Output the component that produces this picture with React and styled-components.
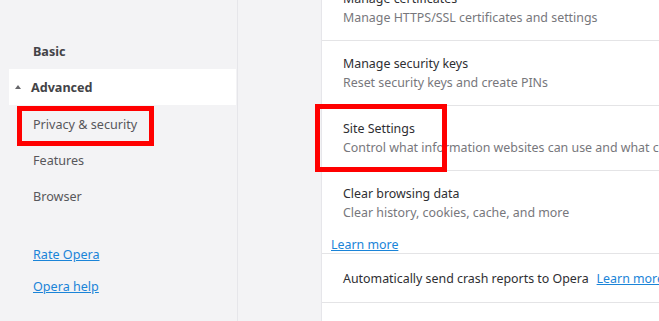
import React from "react";
import styled, { createGlobalStyle } from "styled-components";

const Global = createGlobalStyle`
  html, body { margin: 0; padding: 0; }
  body {
    width: 659px; height: 321px; overflow: hidden;
    font-family: "Noto Sans", "Open Sans", sans-serif;
    background: #f3f3f5;
  }
`;

const Page = styled.div`
  position: relative;
  display: flex;
  width: 659px;
  height: 321px;
  overflow: hidden;
  background: #f3f3f5;
`;

const Sidebar = styled.nav`
  width: 237px;
  flex: none;
  border-right: 1px solid #e6e6ea;
  padding-top: 33px;
  box-sizing: content-box;
  display: flex;
  flex-direction: column;
`;

const NavItem = styled.div`
  height: 36px;
  display: flex;
  align-items: center;
  margin-left: 9px;
  margin-right: 1px;
  padding-left: ${(p) => (p.$expander ? "6px" : "24px")};
  padding-top: ${(p) => (p.$bold ? "0" : "2px")};
  box-sizing: border-box;
  background: ${(p) => (p.$active ? "#ffffff" : "transparent")};
  color: ${(p) => (p.$bold ? "#434347" : "#57575b")};
  font-weight: ${(p) => (p.$bold ? 700 : 400)};
  font-size: 12.6px;
`;

const Caret = styled.span`
  width: 0;
  height: 0;
  border-left: 3.5px solid transparent;
  border-right: 3.5px solid transparent;
  border-bottom: 4px solid #66666a;
  margin-right: 10px;
`;

const LinkGroup = styled.div`
  margin-top: 33px;
  display: flex;
  flex-direction: column;
  gap: 14px;
  padding-left: 33px;
`;

const SideLink = styled.a`
  color: #1a84d8;
  text-decoration: underline;
  font-size: 12.6px;
  line-height: 18px;
  cursor: pointer;
`;

const Gutter = styled.div`
  width: 83px;
  flex: none;
  border-right: 1px solid #e6e6ea;
`;

const Card = styled.main`
  flex: 1;
  background: #ffffff;
  overflow: hidden;
`;

const Scroller = styled.div`
  margin-top: -24px;
`;

const Row = styled.div`
  padding: 14px 0 ${(p) => (p.$tight ? "0" : "13px")} 21px;
  border-bottom: 1px solid #e4e4e6;
  display: flex;
  flex-direction: column;
  gap: 1px;
`;

const Title = styled.div`
  font-size: 12.4px;
  line-height: 18px;
  color: #2e2e32;
  white-space: nowrap;
`;

const Sub = styled.div`
  font-size: 12.4px;
  line-height: 18px;
  color: #77777c;
  white-space: nowrap;
`;

const RowLink = styled.a`
  align-self: flex-start;
  color: #1a84d8;
  text-decoration: underline;
  font-size: 12.4px;
  line-height: 16px;
  margin: 14px 0 0 -12px;
  cursor: pointer;
`;

const InlineRow = styled.div`
  padding: 16px 0 14px 21px;
  border-bottom: 1px solid #e4e4e6;
  display: flex;
  gap: 8px;
  font-size: 12.4px;
  line-height: 18px;
  color: #2e2e32;
  white-space: nowrap;
`;

const InlineLink = styled.a`
  color: #1a84d8;
  text-decoration: underline;
  cursor: pointer;
`;

const Highlight = styled.div`
  position: absolute;
  box-sizing: border-box;
  border: 5px solid #ff0000;
  pointer-events: none;
`;

export default function App() {
  return (
    <>
      <Global />
      <Page>
        <Sidebar>
          <NavItem $bold>Basic</NavItem>
          <NavItem $bold $active $expander>
            <Caret />
            Advanced
          </NavItem>
          <NavItem>Privacy &amp; security</NavItem>
          <NavItem>Features</NavItem>
          <NavItem>Browser</NavItem>
          <LinkGroup>
            <SideLink>Rate Opera</SideLink>
            <SideLink>Opera help</SideLink>
          </LinkGroup>
        </Sidebar>
        <Gutter />
        <Card>
          <Scroller>
            <Row>
              <Title>Manage certificates</Title>
              <Sub>Manage HTTPS/SSL certificates and settings</Sub>
            </Row>
            <Row>
              <Title>Manage security keys</Title>
              <Sub>Reset security keys and create PINs</Sub>
            </Row>
            <Row>
              <Title>Site Settings</Title>
              <Sub>Control what information websites can use and what content they can show you</Sub>
            </Row>
            <Row $tight>
              <Title>Clear browsing data</Title>
              <Sub>Clear history, cookies, cache, and more</Sub>
              <RowLink>Learn more</RowLink>
            </Row>
            <InlineRow>
              <span>Automatically send crash reports to Opera</span>
              <InlineLink>Learn more</InlineLink>
            </InlineRow>
          </Scroller>
        </Card>
        <Highlight style={{ left: 17, top: 106, width: 137, height: 40 }} />
        <Highlight style={{ left: 315, top: 104, width: 132, height: 68 }} />
      </Page>
    </>
  );
}
